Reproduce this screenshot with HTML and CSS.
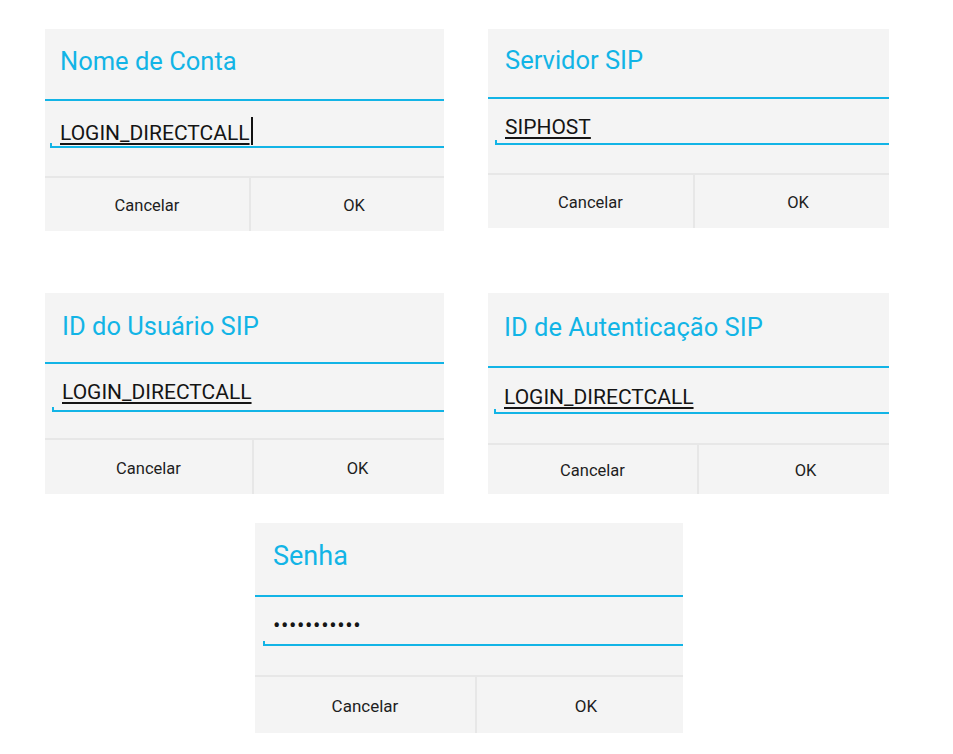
FILE: index.html
```html
<!DOCTYPE html>
<html lang="pt">
<head>
<meta charset="utf-8">
<title>Configuração SIP</title>
<link rel="stylesheet" href="styles.css">
</head>
<body>
<main class="board">
  <div class="row row--top">
    <section class="dialog dialog--account">
      <div class="dialog-head"><span class="dialog-title">Nome de Conta</span></div>
      <div class="dialog-field">
        <div class="field-value"><span class="field-text">LOGIN_DIRECTCALL</span><span class="caret"></span></div>
        <div class="field-line"></div>
      </div>
      <div class="dialog-buttons"><div class="btn">Cancelar</div><div class="btn btn--ok">OK</div></div>
    </section>
    <section class="dialog dialog--server">
      <div class="dialog-head"><span class="dialog-title">Servidor SIP</span></div>
      <div class="dialog-field">
        <div class="field-value"><span class="field-text">SIPHOST</span></div>
        <div class="field-line"></div>
      </div>
      <div class="dialog-buttons"><div class="btn">Cancelar</div><div class="btn btn--ok">OK</div></div>
    </section>
  </div>
  <div class="row row--middle">
    <section class="dialog dialog--user">
      <div class="dialog-head"><span class="dialog-title">ID do Usuário SIP</span></div>
      <div class="dialog-field">
        <div class="field-value"><span class="field-text">LOGIN_DIRECTCALL</span></div>
        <div class="field-line"></div>
      </div>
      <div class="dialog-buttons"><div class="btn">Cancelar</div><div class="btn btn--ok">OK</div></div>
    </section>
    <section class="dialog dialog--auth">
      <div class="dialog-head"><span class="dialog-title">ID de Autenticação SIP</span></div>
      <div class="dialog-field">
        <div class="field-value"><span class="field-text">LOGIN_DIRECTCALL</span></div>
        <div class="field-line"></div>
      </div>
      <div class="dialog-buttons"><div class="btn">Cancelar</div><div class="btn btn--ok">OK</div></div>
    </section>
  </div>
  <div class="row row--bottom">
    <section class="dialog dialog--pass">
      <div class="dialog-head"><span class="dialog-title">Senha</span></div>
      <div class="dialog-field">
        <div class="field-value field-value--dots"><span class="field-dots">•••••••••••</span></div>
        <div class="field-line"></div>
      </div>
      <div class="dialog-buttons"><div class="btn">Cancelar</div><div class="btn btn--ok">OK</div></div>
    </section>
  </div>
</main>
</body>
</html>
```

FILE: styles.css
```css
* { box-sizing: border-box; }

html, body {
  margin: 0;
  background: #ffffff;
}

body {
  font-family: Roboto, "Noto Sans", "Liberation Sans", sans-serif;
  color: #222222;
}

.board {
  display: flex;
  flex-direction: column;
  padding: 29px 0 0 45px;
}

.row {
  display: flex;
  align-items: flex-start;
  gap: 44px;
}

.row--middle { margin-top: 62px; }
.row--bottom { margin-top: 29px; padding-left: 210px; }

.dialog {
  --head: 70px;
  --field: 75px;
  --foot: 55px;
  --title-top: 18px;
  --title-size: 25.5px;
  --text-left: 15px;
  --value-top: 16px;
  --line-left: 5px;
  --line-gap: 1px;
  --split: 204px;
  --ok-shift: 13px;
  --btn-size: 16.5px;
  width: 399px;
  background: #f4f4f4;
  display: flex;
  flex-direction: column;
}

.dialog--account { width: 399px; }

.dialog--server {
  width: 401px;
  --head: 68px;
  --field: 74px;
  --foot: 55px;
  --title-top: 17px;
  --text-left: 17px;
  --line-left: 7px;
  --line-gap: 0px;
  --split: 205px;
  --ok-shift: 12px;
}

.dialog--user {
  width: 399px;
  --head: 69px;
  --field: 74px;
  --foot: 56px;
  --title-top: 19px;
  --text-left: 17px;
  --line-left: 7px;
  --line-gap: 2px;
  --split: 207px;
  --ok-shift: 17px;
}

.dialog--auth {
  width: 401px;
  --head: 73px;
  --field: 75px;
  --foot: 51px;
  --title-top: 20px;
  --text-left: 16px;
  --value-top: 17px;
  --line-left: 6px;
  --line-gap: -1px;
  --split: 209px;
  --ok-shift: 23px;
}

.dialog--pass {
  width: 428px;
  --head: 72px;
  --field: 78px;
  --foot: 58px;
  --title-top: 19px;
  --title-size: 27px;
  --text-left: 18px;
  --value-top: 16px;
  --line-left: 8px;
  --line-gap: 3px;
  --split: 220px;
  --ok-shift: 12px;
  --btn-size: 17px;
}

.dialog-head {
  height: calc(var(--head) + 2px);
  border-bottom: 2px solid #12b4e6;
  padding: var(--title-top) 0 0 var(--text-left);
}

.dialog-title {
  display: block;
  font-size: var(--title-size);
  line-height: 28px;
  color: #12b4e6;
  white-space: nowrap;
}

.dialog-field {
  height: var(--field);
}

.field-value {
  height: calc(var(--value-top) + 25px);
  padding: var(--value-top) 0 0 var(--text-left);
  font-size: 21px;
  line-height: 25px;
  color: #151515;
  white-space: nowrap;
}

.field-text {
  text-decoration: underline;
  text-decoration-thickness: 1.5px;
  text-underline-offset: 3px;
}

.caret {
  display: inline-block;
  width: 2px;
  height: 28px;
  margin-left: 1px;
  vertical-align: -5px;
  background: #111111;
}

.field-dots {
  font-size: 22px;
  letter-spacing: 0.6px;
}

.field-line {
  height: 5px;
  margin: var(--line-gap) 0 0 var(--line-left);
  border-left: 2px solid #12b4e6;
  border-bottom: 2px solid #12b4e6;
}

.dialog-buttons {
  height: var(--foot);
  border-top: 2px solid #e7e7e7;
  display: grid;
  grid-template-columns: var(--split) 1fr;
}

.btn {
  display: flex;
  align-items: center;
  justify-content: center;
  padding-top: 2px;
  font-size: var(--btn-size);
  color: #1e1e1e;
}

.btn--ok {
  border-left: 2px solid #e7e7e7;
  padding-left: var(--ok-shift);
}
```
